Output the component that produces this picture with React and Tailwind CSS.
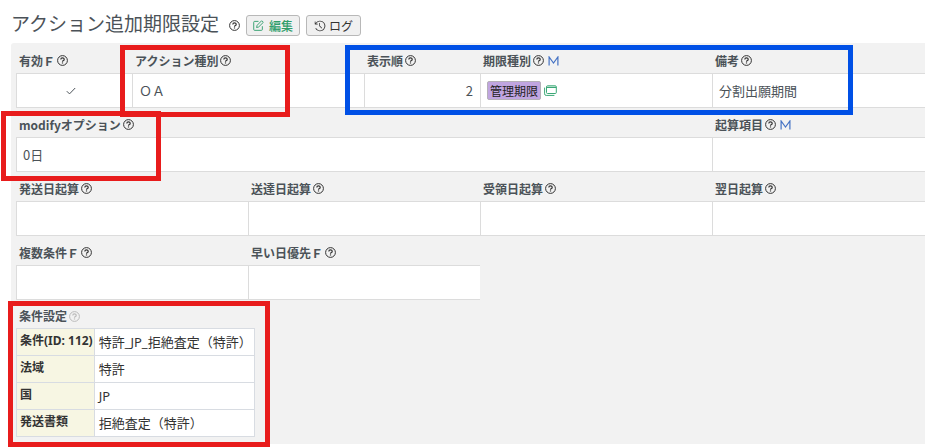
import { VscHistory } from 'react-icons/vsc';

// Help mark shown after every label
function HelpIcon({ className = 'text-[#333]' }) {
    return (
        <svg viewBox="0 0 11 11" className={`w-[11px] h-[11px] shrink-0 ${className}`} fill="none" stroke="currentColor">
            <circle cx="5.5" cy="5.5" r="4.9" strokeWidth="1" />
            <path d="M3.8 4.5c0-2.1 3.4-2.1 3.4-.1 0 1.2-1.7 1.1-1.7 2.3" strokeWidth="1.2" />
            <path d="M5.5 7.4v1.1" strokeWidth="1.2" />
        </svg>
    );
}

function EditIcon() {
    return (
        <svg viewBox="0 0 12 12" className="w-[11px] h-[11px]" fill="none" stroke="currentColor" strokeWidth="1">
            <path d="M6 1.5H1.8a1 1 0 0 0-1 1v7.8a1 1 0 0 0 1 1h7.4a1 1 0 0 0 1-1V6.8" />
            <path d="M9.4.8l1.8 1.8-5 5-2.3.6.6-2.4z" />
        </svg>
    );
}

function WindowsIcon() {
    return (
        <svg viewBox="0 0 13 11" className="w-[13px] h-[11px]" fill="none" stroke="currentColor" strokeWidth="1">
            <rect x="2.5" y=".8" width="9.8" height="7.7" rx="1" />
            <path d="M2.5 2.4h9.8" strokeWidth="1.2" />
            <path d="M.6 2.6v6.2a1.6 1.6 0 0 0 1.6 1.6h8.2" />
        </svg>
    );
}

function MasterIcon() {
    return (
        <svg viewBox="0 0 11 10" className="w-[11px] h-[10px] ml-[2px] text-[#4472c4]" fill="none" stroke="currentColor" strokeWidth="1.2">
            <path d="M1.1 9.5V1l4.4 6L9.9 1v8.5" />
        </svg>
    );
}

function CheckIcon() {
    return (
        <svg viewBox="0 0 10 8" className="w-[10px] h-[8px]" fill="none" stroke="currentColor" strokeWidth="1">
            <path d="M.8 4.2l2.7 2.7L9.2 1" />
        </svg>
    );
}

function Field({ label, master = false, className = '', valueClass = 'px-[6px]', children }) {
    return (
        <div className={className}>
            <dt className="h-[29px] pt-1 pl-[3px] flex items-center gap-[2px] text-[12px] leading-[18px] font-bold whitespace-nowrap">
                {label}
                <HelpIcon />
                {master && <MasterIcon />}
            </dt>
            <dd className={`h-[35px] flex items-center gap-[3px] bg-white border-y border-l border-[#dcdcdc] text-[13px] ${valueClass}`}>
                {children}
            </dd>
        </div>
    );
}

const conditions = [
    ['条件(ID: 112)', '特許_JP_拒絶査定（特許）'],
    ['法域', '特許'],
    ['国', 'JP'],
    ['発送書類', '拒絶査定（特許）'],
];

// Frames drawn over the form
const frames = [
    'left-[120px] top-[45px] w-[170px] h-[72px] border-[#e81c1c]',
    'left-[345px] top-[45px] w-[508px] h-[70px] border-[#0050e6]',
    'left-[1px] top-[111px] w-[160px] h-[70px] border-[#e81c1c]',
    'left-[8px] top-[301px] w-[262px] h-[146px] border-[#e81c1c]',
];

export default function App() {
    return (
        <main
            lang="ja"
            className="relative min-h-screen bg-white pl-[11px] pb-1 text-[#4b5258] font-['Noto_Sans_CJK_JP','Noto_Sans',sans-serif]"
        >
            <header className="h-[43px] pt-2 flex items-center">
                <h1 className="text-[19px] leading-[28px] pb-[6px] mr-[10px] whitespace-nowrap">アクション追加期限設定</h1>
                <HelpIcon className="mr-[6px] text-[#333]" />
                <button type="button" className="h-[21px] px-[6px] mr-[6px] flex items-center gap-[5px] rounded-[3px] border border-[#b8b8b8] bg-[#f0f0f0] text-[12px] text-[#2f9e6b] font-medium">
                    <EditIcon />
                    編集
                </button>
                <button type="button" className="h-[21px] px-[7px] flex items-center gap-[3px] rounded-[3px] border border-[#b8b8b8] bg-[#f0f0f0] text-[12px] text-[#333]">
                    <VscHistory className="w-[12px] h-[12px]" />
                    ログ
                </button>
            </header>

            <section className="bg-[#f2f2f2] pl-[5px] pt-px pb-[7px] rounded-tl-[3px]">
                <dl className="grid grid-cols-[repeat(6,116px)_1fr]">
                    <Field label="有効Ｆ" valueClass="justify-center pr-2">
                        <CheckIcon />
                    </Field>
                    <Field label="アクション種別" className="col-span-2">ＯＡ</Field>
                    <Field label="表示順" valueClass="justify-end pr-[7px]">2</Field>
                    <Field label="期限種別" master className="col-span-2">
                        <span className="px-[2px] h-[19px] leading-[17px] rounded-[2px] border border-[#b5b0b8] bg-[#c0a5e0] text-[12px] text-[#222]">管理期限</span>
                        <button type="button" aria-label="開く" className="text-[#3aa876]">
                            <WindowsIcon />
                        </button>
                    </Field>
                    <Field label="備考">分割出願期間</Field>

                    <Field label="modifyオプション" className="col-span-6">0日</Field>
                    <Field label="起算項目" master />

                    <Field label="発送日起算" className="col-span-2" />
                    <Field label="送達日起算" className="col-span-2" />
                    <Field label="受領日起算" className="col-span-2" />
                    <Field label="翌日起算" />

                    <Field label="複数条件Ｆ" className="col-span-2" />
                    <Field label="早い日優先Ｆ" className="col-span-2" />
                </dl>

                <h2 id="conditions" className="h-[28px] pt-1 pl-[3px] flex items-center gap-[2px] text-[12px] leading-[18px] font-bold">
                    条件設定
                    <HelpIcon className="text-[#bbb]" />
                </h2>
                <table aria-labelledby="conditions" className="border-collapse bg-white text-[#333]">
                    <tbody>
                        {conditions.map(([name, value]) => (
                            <tr key={name} className="h-[27px]">
                                <th scope="row" className="border border-[#d8dce2] bg-[#f7f6e3] pl-[3px] pr-px pb-[3px] align-middle text-left text-[12px] leading-[18px] font-bold whitespace-nowrap font-['Noto_Sans','Noto_Sans_CJK_JP',sans-serif]">
                                    {name}
                                </th>
                                <td className="border border-[#d8dce2] pl-1 pr-[2px] text-[13px] leading-[20px] whitespace-nowrap font-['Noto_Sans','Noto_Sans_CJK_JP',sans-serif]">
                                    {value}
                                </td>
                            </tr>
                        ))}
                    </tbody>
                </table>
            </section>

            {frames.map((frame) => (
                <div key={frame} className={`absolute border-[5px] pointer-events-none ${frame}`} />
            ))}
        </main>
    );
}
